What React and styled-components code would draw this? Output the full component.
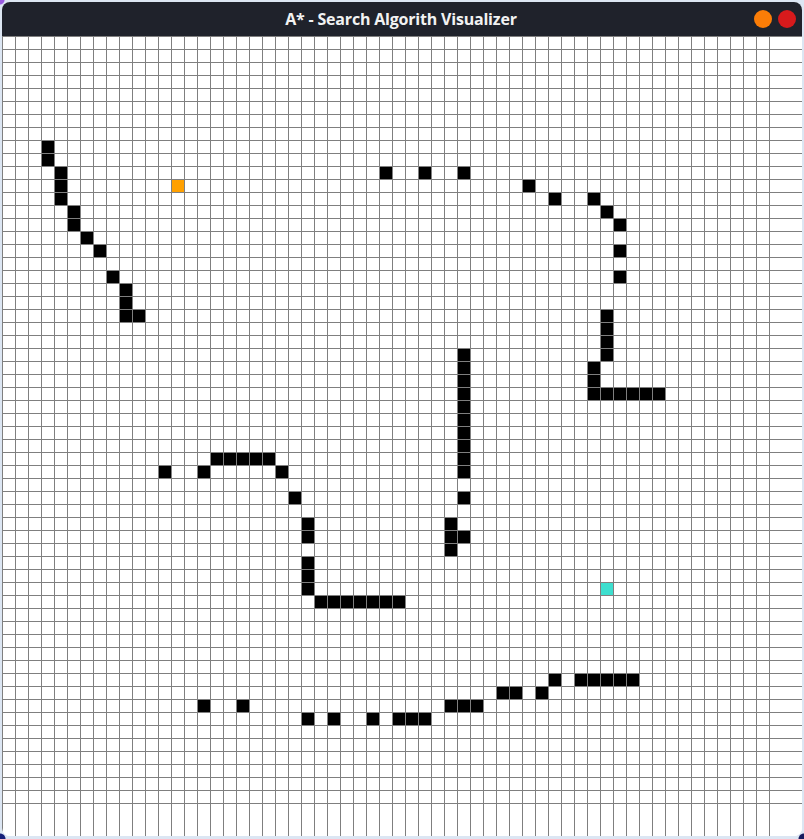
import React from "react";
import styled, { createGlobalStyle } from "styled-components";

const COLS = 59;
const ROWS = 59;

const range = (from, to, fixed, horizontal) => {
  const out = [];
  for (let i = from; i <= to; i++) out.push(horizontal ? [i, fixed] : [fixed, i]);
  return out;
};

const walls = [
  [3, 8], [3, 9], [4, 10], [4, 11], [4, 12], [5, 13], [5, 14], [6, 15], [7, 16],
  [8, 18], [9, 19], [9, 20], [9, 21], [10, 21],
  [29, 10], [32, 10], [35, 10], [40, 11], [42, 12], [45, 12], [46, 13], [47, 14],
  [47, 16], [47, 18], [46, 21], [46, 22], [46, 23], [46, 24], [45, 25], [45, 26],
  ...range(45, 50, 27, true),
  ...range(24, 33, 35, false),
  [35, 35], [34, 37], [34, 38], [35, 38], [34, 39],
  [12, 33], [15, 33], ...range(16, 20, 32, true), [21, 33], [22, 35],
  [23, 37], [23, 38], [23, 40], [23, 41], [23, 42],
  ...range(24, 30, 43, true),
  [15, 51], [18, 51], [23, 52], [25, 52], [28, 52], ...range(30, 32, 52, true),
  ...range(34, 36, 51, true), [38, 50], [39, 50], [41, 50], [42, 49],
  ...range(44, 48, 49, true),
];

const kinds = new Map();
walls.forEach(([c, r]) => kinds.set(`${c},${r}`, "wall"));
kinds.set("13,11", "start");
kinds.set("46,42", "end");

const GlobalStyle = createGlobalStyle`
  html, body {
    margin: 0;
    padding: 0;
  }
  body {
    min-height: 100vh;
    font-family: "Open Sans", "Noto Sans", sans-serif;
    background:
      radial-gradient(circle at 0 0, #9a5be0 0 4px, transparent 5px),
      radial-gradient(circle at 0 100%, #17207a 0 5px, transparent 6px),
      radial-gradient(circle at 100% 100%, #161b5e 0 5px, transparent 6px),
      #dce6f3;
  }
`;

const Window = styled.div`
  margin: 2px;
  width: 800px;
  height: 834px;
  border-radius: 8px;
  overflow: hidden;
  display: flex;
  flex-direction: column;
  background: #fff;
`;

const TitleBar = styled.div`
  height: 34px;
  flex: none;
  background: #1f222b;
  display: grid;
  grid-template-columns: 1fr auto 1fr;
  align-items: center;
  padding-right: 6px;
`;

const Title = styled.div`
  grid-column: 2;
  color: #f2f2f2;
  font-weight: 700;
  font-size: 16px;
  letter-spacing: -0.2px;
  transform: translateX(2px);
`;

const Controls = styled.div`
  justify-self: end;
  display: flex;
  gap: 6px;
`;

const Dot = styled.span`
  width: 18px;
  height: 18px;
  border-radius: 50%;
  background: ${(p) => p.$color};
`;

const Board = styled.div`
  flex: 1;
  display: grid;
  grid-template-columns: repeat(${COLS}, 13px) 1fr;
  grid-template-rows: repeat(${ROWS}, 13px) 1fr;
`;

const fills = { wall: "#000", start: "#ffa000", end: "#3ddfcf" };

const Cell = styled.div`
  box-sizing: border-box;
  border-left: 1px solid #7f7f7f;
  border-top: 1px solid #7f7f7f;
  background: ${(p) => fills[p.$kind] || "#fff"};
`;

export default function App() {
  const cells = [];
  for (let r = 0; r <= ROWS; r++) {
    for (let c = 0; c <= COLS; c++) {
      cells.push(<Cell key={`${c}-${r}`} $kind={kinds.get(`${c},${r}`)} />);
    }
  }
  return (
    <>
      <GlobalStyle />
      <Window>
        <TitleBar>
          <Title>A* - Search Algorith Visualizer</Title>
          <Controls>
            <Dot $color="#fb7d07" />
            <Dot $color="#d71a1c" />
          </Controls>
        </TitleBar>
        <Board>{cells}</Board>
      </Window>
    </>
  );
}
